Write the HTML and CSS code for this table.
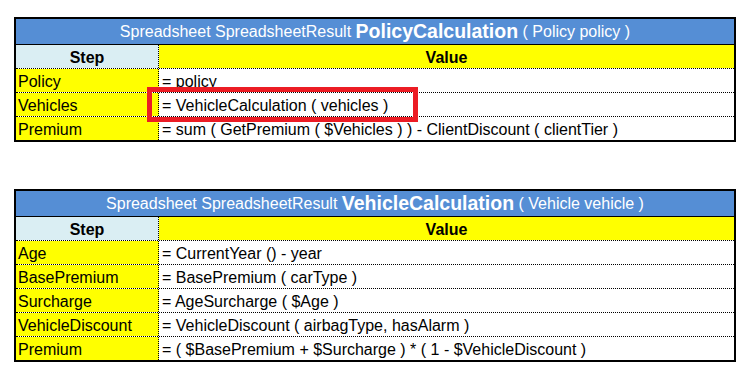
FILE: index.html
```html
<!DOCTYPE html>
<html>
<head>
<meta charset="utf-8">
<link rel="stylesheet" href="styles.css">
</head>
<body>
<div class="wrap">
  <div class="sheet">
    <div class="title">Spreadsheet SpreadsheetResult <b>PolicyCalculation</b> ( Policy policy )</div>
    <div class="row head"><div class="step">Step</div><div class="val">Value</div></div>
    <div class="row"><div class="step">Policy</div><div class="val">= policy</div></div>
    <div class="row"><div class="step">Vehicles</div><div class="val">= VehicleCalculation ( vehicles )</div></div>
    <div class="row"><div class="step">Premium</div><div class="val">= sum ( GetPremium ( $Vehicles ) ) - ClientDiscount ( clientTier )</div></div>
  </div>
  <div class="highlight"></div>
</div>

<div class="wrap second">
  <div class="sheet">
    <div class="title">Spreadsheet SpreadsheetResult <b>VehicleCalculation</b> ( Vehicle vehicle )</div>
    <div class="row head"><div class="step">Step</div><div class="val">Value</div></div>
    <div class="row"><div class="step">Age</div><div class="val">= CurrentYear () - year</div></div>
    <div class="row"><div class="step">BasePremium</div><div class="val">= BasePremium ( carType )</div></div>
    <div class="row"><div class="step">Surcharge</div><div class="val">= AgeSurcharge ( $Age )</div></div>
    <div class="row"><div class="step">VehicleDiscount</div><div class="val">= VehicleDiscount ( airbagType, hasAlarm )</div></div>
    <div class="row"><div class="step">Premium</div><div class="val">= ( $BasePremium + $Surcharge ) * ( 1 - $VehicleDiscount )</div></div>
  </div>
</div>
</body>
</html>
```

FILE: styles.css
```css
html, body {
  margin: 0;
  padding: 0;
  background: #fff;
}
body {
  padding: 17px 14px 0 14px;
  font-family: "Liberation Sans", Arial, sans-serif;
  font-size: 16px;
  color: #000;
}
.wrap {
  position: relative;
  width: 722px;
}
.wrap.second {
  margin-top: 47px;
}
.sheet {
  border: 2px solid #000;
  box-sizing: border-box;
  width: 722px;
}
.title {
  height: 25px;
  border-bottom: 1px solid #000;
  background: #558ed5;
  color: #fff;
  display: flex;
  align-items: center;
  justify-content: center;
  white-space: pre;
  font-size: 16px;
}
.title b {
  font-size: 19.5px;
  font-weight: bold;
}
.row {
  display: grid;
  grid-template-columns: 143px 1fr;
  height: 24px;
  box-sizing: border-box;
  border-bottom: 1px dotted #000;
}
.row:last-child {
  border-bottom: none;
  height: 23px;
}
.step {
  background: #ffff00;
  border-right: 1px dotted #000;
  padding-left: 2px;
  padding-top: 2px;
  display: flex;
  align-items: center;
  white-space: nowrap;
}
.val {
  background: #fff;
  padding-left: 3px;
  padding-top: 2px;
  display: flex;
  align-items: center;
  white-space: nowrap;
}
.head .step {
  background: #daeef3;
  justify-content: center;
  font-weight: bold;
  padding-left: 0;
}
.head .val {
  background: #ffff00;
  justify-content: center;
  font-weight: bold;
  padding-left: 0;
}
.highlight {
  position: absolute;
  left: 133px;
  top: 70px;
  width: 271px;
  height: 35px;
  box-sizing: border-box;
  border: 5px solid #ec1c24;
}
```
